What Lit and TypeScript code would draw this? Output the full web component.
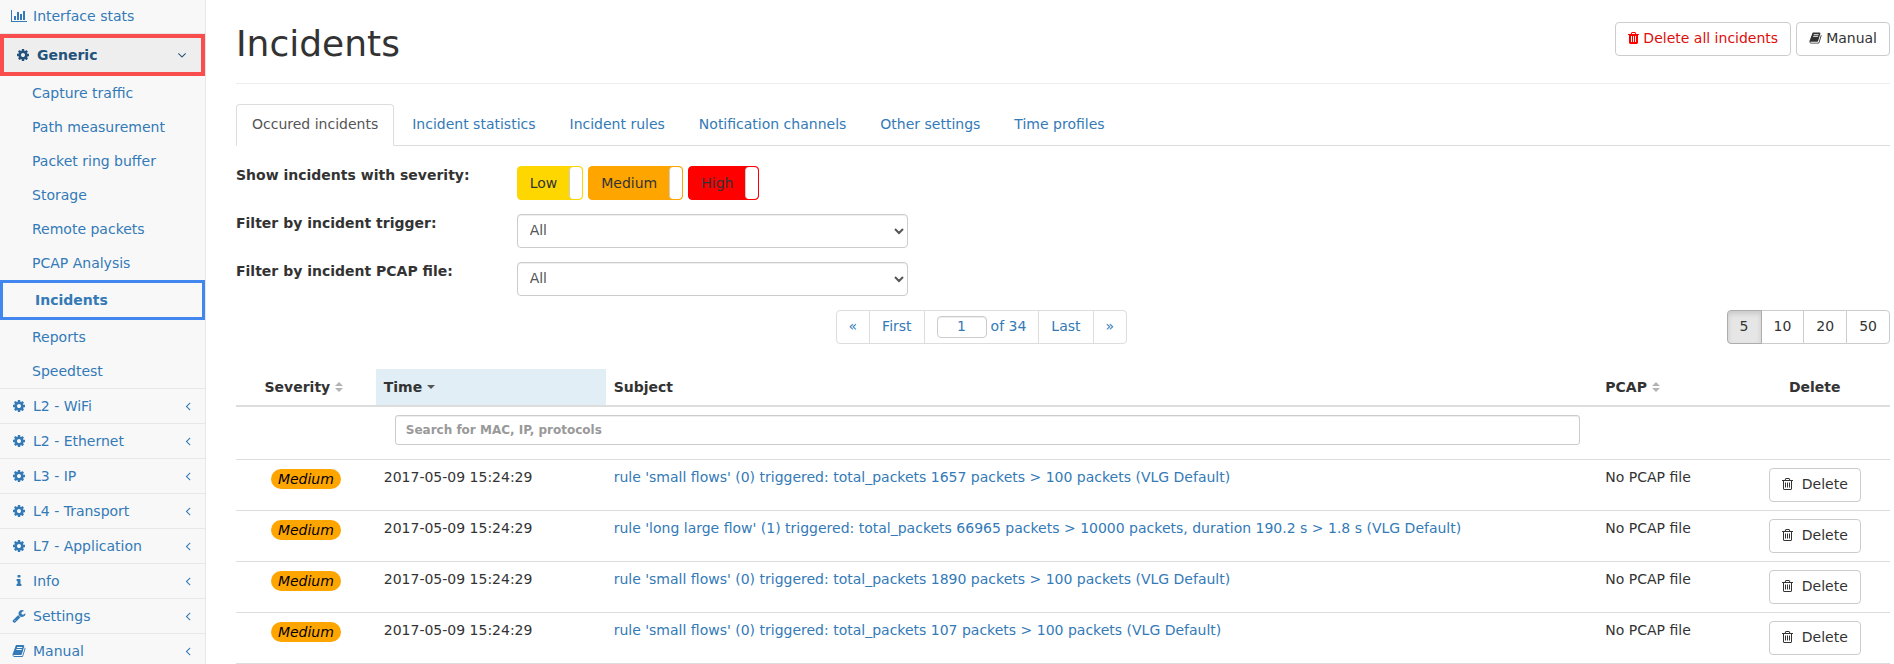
import { LitElement, html, css, svg } from "lit";
import { customElement, property, state } from "lit/decorators.js";
import { classMap } from "lit/directives/class-map.js";

const rail = "q0-14-9-23t-23-9h-64q-14 0-23 9t-9 23";
const railEnd = "q0 14 9 23t23 9h64q14 0 23-9t9-23z";
const lid =
  "h448l-48-117q-7-9-17-11h-317q-10 2-17 11zm928 32v64q0 14-9 23t-23 9h-96v948q0 83-47 143.500t-113 60.500h-832q-66 0-113-58.500t-47-141.500v-952h-96q-14 0-23-9t-9-23v-64q0-14 9-23t23-9h309l70-167q15-37 54-63t79-26h320q40 0 79 26t54 63l70 167h309q14 0 23 9t9 23z";

const icons: Record<string, { box: string; d: string }> = {
  chart: {
    box: "0 0 2048 1792",
    d: "M640 896v512h-256v-512h256zm384-512v1024h-256v-1024h256zm1024 1152v128h-2048v-1536h128v1408h1920zm-640-896v768h-256v-768h256zm384-384v1152h-256v-1152h256z",
  },
  cog: {
    box: "0 0 1792 1792",
    d: "M1152 896q0-106-75-181t-181-75-181 75-75 181 75 181 181 75 181-75 75-181zm512-109v222q0 12-8 23t-20 13l-185 28q-19 54-39 91 35 50 107 138 10 12 10 25t-9 23q-27 37-99 108t-94 71q-12 0-26-9l-138-108q-44 23-91 38-16 136-29 186-7 28-36 28h-222q-14 0-24.500-8.500t-11.500-21.500l-28-184q-49-16-90-37l-141 107q-10 9-25 9-14 0-25-11-126-114-165-168-7-10-7-23 0-12 8-23 15-21 51-66.500t54-70.500q-27-50-41-99l-183-27q-13-2-21-12.500t-8-23.500v-222q0-12 8-23t19-13l186-28q14-46 39-92-40-57-107-138-10-12-10-24 0-10 9-23 26-36 98.500-107.500t94.500-71.500q13 0 26 10l138 107q44-23 91-38 16-136 29-186 7-28 36-28h222q14 0 24.500 8.500t11.500 21.500l28 184q49 16 90 37l142-107q9-9 24-9 13 0 25 10 129 119 165 170 7 8 7 22 0 12-8 23-15 21-51 66.500t-54 70.500q26 50 41 98l183 28q13 2 21 12.500t8 23.500z",
  },
  info: {
    box: "0 0 1792 1792",
    d: "M1216 1344v128q0 26-19 45t-45 19h-512q-26 0-45-19t-19-45v-128q0-26 19-45t45-19h64v-384h-64q-26 0-45-19t-19-45v-128q0-26 19-45t45-19h384q26 0 45 19t19 45v576h64q26 0 45 19t19 45zm-128-1152v192q0 26-19 45t-45 19h-256q-26 0-45-19t-19-45v-192q0-26 19-45t45-19h256q26 0 45 19t19 45z",
  },
  wrench: {
    box: "0 0 1792 1792",
    d: "M448 1472q0-26-19-45t-45-19-45 19-19 45 19 45 45 19 45-19 19-45zm644-420l-682 682q-37 37-90 37-52 0-91-37l-106-108q-38-36-38-90 0-53 38-91l681-681q39 98 114.500 173.500t173.500 114.500zm634-435q0 39-23 106-47 134-164.500 217.500t-258.500 83.500q-185 0-316.500-131.500t-131.500-316.500 131.500-316.500 316.500-131.500q58 0 121.500 16.500t107.500 46.500q16 11 16 28t-16 28l-293 169v224l193 107q5-3 79-48.500t135.500-81 70.500-35.500q15 0 23.500 10t8.500 25z",
  },
  book: {
    box: "0 0 1792 1792",
    d: "M1703 478q40 57 18 129l-275 906q-19 64-76.500 107.500t-122.500 43.500h-923q-77 0-148.500-53.500t-99.500-131.500q-24-67-2-127 0-4 3-27t4-37q1-8-3-21.500t-3-19.500q2-11 8-21t16.500-23.500 16.500-23.500q23-38 45-91.500t30-91.500q3-10 .5-30t-.5-28q3-11 17-28t17-23q21-36 42-92t25-90q1-9-2.500-32t.5-28q4-13 22-30.500t22-22.500q19-26 42.500-84.500t27.500-96.500q1-8-3-25.500t-2-26.500q2-8 9-18t18-23 17-21q8-12 16.500-30.500t15-35 16-36 19.500-32 26.500-23.500 36-11.500 47.500 5.500l-1 3q38-9 51-9h761q74 0 114 56t18 130l-274 906q-36 119-71.500 153.500t-128.500 34.500h-869q-27 0-38 15-11 16-1 43 24 70 144 70h923q29 0 56-15.500t35-41.500l300-987q7-22 5-57 38 15 59 43zm-1064 2q-4 13 2 22.500t20 9.500h608q13 0 25.500-9.500t16.500-22.500l21-64q4-13-2-22.500t-20-9.500h-608q-13 0-25.500 9.500t-16.500 22.500zm-83 256q-4 13 2 22.500t20 9.500h608q13 0 25.500-9.500t16.500-22.500l21-64q4-13-2-22.500t-20-9.500h-608q-13 0-25.500 9.500t-16.500 22.500z",
  },
  left: {
    box: "0 0 1792 1792",
    d: "M1203 544q0 13-10 23l-393 393 393 393q10 10 10 23t-10 23l-50 50q-10 10-23 10t-23-10l-466-466q-10-10-10-23t10-23l466-466q10-10 23-10t23 10l50 50q10 10 10 23z",
  },
  down: {
    box: "0 0 1792 1792",
    d: "M1395 736q0 13-10 23l-466 466q-10 10-23 10t-23-10l-466-466q-10-10-10-23t10-23l50-50q10-10 23-10t23 10l393 393 393-393q10-10 23-10t23 10l50 50q10 10 10 23z",
  },
  trash: {
    box: "192 0 1408 1792",
    d: `M704 1376v-704${rail}v704${railEnd}m256 0v-704${rail}v704${railEnd}m256 0v-704${rail}v704${railEnd}m-544-992${lid}`,
  },
  trashOpen: {
    box: "192 0 1408 1792",
    d: `M704 736v576q0 14-9 23t-23 9h-64q-14 0-23-9t-9-23v-576q0-14 9-23t23-9h64q14 0 23 9t9 23zm256 0v576q0 14-9 23t-23 9h-64q-14 0-23-9t-9-23v-576q0-14 9-23t23-9h64q14 0 23 9t9 23zm256 0v576q0 14-9 23t-23 9h-64q-14 0-23-9t-9-23v-576q0-14 9-23t23-9h64q14 0 23 9t9 23zm128 724v-948h-896v948q0 22 7 40.500t14.500 27 10.500 8.500h832q3 0 10.500-8.500t14.500-27 7-40.500zm-672-1076${lid}`,
  },
  sort: {
    box: "0 0 8 14",
    d: "M0 6L4 2L8 6ZM0 8H8L4 12Z",
  },
  caret: {
    box: "0 0 8 14",
    d: "M0 5H8L4 9Z",
  },
};

const icon = (name: string) =>
  html`<svg class="icon ${name}" viewBox=${icons[name].box} aria-hidden="true">
    ${svg`<path d=${icons[name].d}></path>`}
  </svg>`;

@customElement("side-nav")
class SideNav extends LitElement {
  static styles = css`
    :host {
      display: block;
      background: #f8f8f8;
      border-right: 1px solid #e7e7e7;
    }
    ul {
      list-style: none;
      margin: 0;
      padding: 0;
    }
    .top {
      margin-top: -1px;
    }
    a {
      display: flex;
      align-items: center;
      color: #337ab7;
      text-decoration: none;
      line-height: 20px;
      padding: 7px 10px 7px 12px;
    }
    .top > li {
      border-bottom: 1px solid #e7e7e7;
    }
    .icon {
      height: 14px;
      fill: currentColor;
      flex: none;
    }
    .lead {
      width: 14px;
      margin-right: 7px;
      display: flex;
      justify-content: center;
    }
    .chart {
      width: 16px;
    }
    .label {
      flex: 1;
    }
    .arrow {
      display: flex;
    }
    .sub a {
      padding-left: 32px;
    }
    .open > a {
      border: 4px solid #fa4e4e;
      background: #eee;
      color: #23527c;
      font-weight: bold;
      padding: 7px 12px;
    }
    .sub .current {
      border: 3px solid #4287f0;
      font-weight: bold;
    }
  `;

  private sub = [
    "Capture traffic", "Path measurement", "Packet ring buffer", "Storage", "Remote packets",
    "PCAP Analysis", "Incidents", "Reports", "Speedtest",
  ];
  private rest = [
    ["cog", "L2 - WiFi"], ["cog", "L2 - Ethernet"], ["cog", "L3 - IP"], ["cog", "L4 - Transport"],
    ["cog", "L7 - Application"], ["info", "Info"], ["wrench", "Settings"], ["book", "Manual"],
  ];

  render() {
    return html`<nav aria-label="Main">
      <ul class="top">
        <li>
          <a href="#stats"><span class="lead">${icon("chart")}</span><span class="label">Interface stats</span></a>
        </li>
        <li class="open">
          <a href="#generic"
            ><span class="lead">${icon("cog")}</span><span class="label">Generic</span
            ><span class="arrow">${icon("down")}</span></a
          >
          <ul class="sub">
            ${this.sub.map(
              (s) => html`<li><a href="#" class=${classMap({ current: s === "Incidents" })}>${s}</a></li>`
            )}
          </ul>
        </li>
        ${this.rest.map(
          ([i, s]) => html`<li>
            <a href="#"
              ><span class="lead">${icon(i)}</span><span class="label">${s}</span
              ><span class="arrow">${icon("left")}</span></a
            >
          </li>`
        )}
      </ul>
    </nav>`;
  }
}

@customElement("severity-toggle")
class SeverityToggle extends LitElement {
  @property() label = "";
  @property({ reflect: true }) tone = "low";

  static styles = css`
    :host {
      display: block;
      --tone: #ffd700;
    }
    :host([tone="medium"]) {
      --tone: #ffa500;
    }
    :host([tone="high"]) {
      --tone: #ff0000;
    }
    label {
      position: relative;
      display: flex;
      height: 32px;
      border: 1px solid var(--tone);
      border-radius: 4px;
      background: var(--tone);
      color: #333;
      cursor: pointer;
    }
    .text {
      line-height: 20px;
      padding: 6px 12px;
    }
    .knob {
      width: 13px;
      background: #fff;
      box-sizing: border-box;
      border-left: 1px solid #ccc;
      border-radius: 4px;
    }
    input {
      position: absolute;
      inset: 0;
      margin: 0;
      width: 100%;
      height: 100%;
      opacity: 0;
      cursor: pointer;
    }
  `;

  render() {
    return html`<label
      ><input type="checkbox" checked /><span class="text">${this.label}</span><span class="knob"></span
    ></label>`;
  }
}

@customElement("app-root")
class AppRoot extends LitElement {
  @state() private rows = [
    "rule 'small flows' (0) triggered: total_packets 1657 packets > 100 packets (VLG Default)",
    "rule 'long large flow' (1) triggered: total_packets 66965 packets > 10000 packets, duration 190.2 s > 1.8 s (VLG Default)",
    "rule 'small flows' (0) triggered: total_packets 1890 packets > 100 packets (VLG Default)",
    "rule 'small flows' (0) triggered: total_packets 107 packets > 100 packets (VLG Default)",
  ];

  private tabs = [
    "Occured incidents", "Incident statistics", "Incident rules", "Notification channels",
    "Other settings", "Time profiles",
  ];

  static styles = css`
    :host {
      display: grid;
      grid-template-columns: 206px minmax(0, 1fr);
      height: 100vh;
      overflow: hidden;
      background: #fff;
      color: #333;
      font: 14px/18px "DejaVu Sans", sans-serif;
    }
    main {
      padding: 22px 4px 0 30px;
    }
    a {
      color: #337ab7;
      text-decoration: none;
    }
    button,
    input,
    select {
      font: inherit;
      box-sizing: border-box;
    }
    .icon {
      height: 14px;
      fill: currentColor;
      flex: none;
    }
    .head {
      display: flex;
      justify-content: space-between;
      align-items: flex-start;
      border-bottom: 1px solid #eee;
      margin-bottom: 20px;
      padding-bottom: 19px;
    }
    h1 {
      font-size: 36px;
      line-height: 40px;
      font-weight: 400;
      margin: 2px 0 0;
    }
    .actions {
      display: flex;
      gap: 5px;
    }
    .btn {
      display: inline-flex;
      align-items: center;
      gap: 4px;
      padding: 6px 12px 8px;
      border: 1px solid #ccc;
      border-radius: 4px;
      background: #fff;
      color: #333;
      cursor: pointer;
    }
    .btn .book {
      width: 13px;
    }
    .danger {
      color: #dd0c0c;
    }
    .danger .icon {
      fill: #f00;
    }
    .tabs {
      display: flex;
      gap: 2px;
      list-style: none;
      margin: 0 0 20px;
      padding: 0;
      border-bottom: 1px solid #ddd;
    }
    .tabs a {
      display: block;
      padding: 10px 15px 12px;
      border: 1px solid transparent;
      border-radius: 4px 4px 0 0;
      margin-bottom: -1px;
    }
    .tabs .active {
      color: #555;
      background: #fff;
      border-color: #ddd #ddd #fff;
    }
    .row {
      display: grid;
      grid-template-columns: repeat(12, minmax(0, 1fr));
      column-gap: 30px;
      margin-bottom: 14px;
    }
    .name {
      grid-column: span 2;
      font-weight: bold;
      white-space: nowrap;
    }
    .field {
      grid-column: span 3;
    }
    .toggles {
      display: flex;
      gap: 5px;
    }
    select {
      display: block;
      width: 100%;
      height: 34px;
      padding: 5px 8px 7px;
      border: 1px solid #ccc;
      border-radius: 4px;
      background: #fff;
      color: #555;
      box-shadow: inset 0 1px 1px rgba(0, 0, 0, 0.075);
    }
    .bar {
      display: flex;
      margin-bottom: 25px;
    }
    .pages {
      flex: 1;
      display: flex;
      justify-content: center;
      list-style: none;
      margin: 0;
      padding: 0;
    }
    .page {
      display: flex;
      gap: 4px;
      padding: 6px 12px 8px;
      border: 1px solid #ddd;
      margin-left: -1px;
      color: #337ab7;
    }
    .pages li:first-child .page {
      margin-left: 0;
      border-radius: 4px 0 0 4px;
    }
    .pages li:last-child .page {
      border-radius: 0 4px 4px 0;
    }
    .num {
      width: 50px;
      height: 22px;
      margin: -1px 0 -3px;
      padding: 0 0 2px;
      text-align: center;
      color: #337ab7;
      border: 1px solid #ccc;
      border-radius: 4px;
      background: #fff;
      box-shadow: inset 0 1px 1px rgba(0, 0, 0, 0.075);
    }
    .sizes {
      display: flex;
    }
    .sizes .btn {
      border-radius: 0;
      margin-left: -1px;
    }
    .sizes .btn:first-child {
      border-radius: 4px 0 0 4px;
      background: #e6e6e6;
      border-color: #adadad;
      box-shadow: inset 0 3px 5px rgba(0, 0, 0, 0.125);
      margin-left: 0;
      z-index: 1;
    }
    .sizes .btn:last-child {
      border-radius: 0 4px 4px 0;
    }
    table {
      width: 100%;
      table-layout: fixed;
      border-spacing: 0;
    }
    .c-sev {
      width: 8.45%;
    }
    .c-time {
      width: 13.9%;
    }
    .c-pcap {
      width: 8.6%;
    }
    .c-del {
      width: 9.1%;
    }
    th,
    td {
      padding: 8px;
      text-align: left;
      vertical-align: top;
    }
    thead th {
      line-height: 20px;
      border-bottom: 2px solid #ddd;
    }
    .mid {
      text-align: center;
    }
    .sorted {
      background: #e1eef5;
      background-clip: padding-box;
    }
    .sort,
    .caret {
      width: 8px;
      vertical-align: -2px;
      margin-left: 5px;
    }
    .sort {
      fill: #b3b3b3;
      margin-right: 4px;
    }
    .caret {
      fill: #555;
    }
    tbody td {
      border-top: 1px solid #ddd;
    }
    .line:last-child td {
      border-bottom: 1px solid #ddd;
    }
    .find th {
      padding-bottom: 14px;
    }
    .find .wide {
      padding-left: 19px;
      padding-right: 17px;
    }
    .search {
      display: block;
      width: 100%;
      height: 30px;
      padding: 5px 10px;
      font-size: 12px;
      font-weight: bold;
      line-height: 18px;
      border: 1px solid #ccc;
      border-radius: 3px;
      box-shadow: inset 0 1px 1px rgba(0, 0, 0, 0.075);
    }
    .search::placeholder {
      color: #999;
    }
    .badge {
      display: inline-block;
      padding: 0 7px;
      margin-top: 1px;
      line-height: 20px;
      border-radius: 10px;
      background: #ffa500;
      color: #000;
      font-style: italic;
    }
    .line .btn {
      gap: 9px;
      vertical-align: top;
    }
  `;

  render() {
    return html`
      <side-nav></side-nav>
      <main>
        <div class="head">
          <h1>Incidents</h1>
          <div class="actions">
            <button class="btn danger">${icon("trash")}Delete all incidents</button>
            <button class="btn">${icon("book")}Manual</button>
          </div>
        </div>
        <ul class="tabs">
          ${this.tabs.map((t, i) => html`<li><a href="#" class=${classMap({ active: i === 0 })}>${t}</a></li>`)}
        </ul>
        <div class="row">
          <span class="name">Show incidents with severity:</span>
          <div class="field toggles">
            <severity-toggle label="Low" tone="low"></severity-toggle>
            <severity-toggle label="Medium" tone="medium"></severity-toggle>
            <severity-toggle label="High" tone="high"></severity-toggle>
          </div>
        </div>
        <div class="row">
          <label class="name" for="trigger">Filter by incident trigger:</label>
          <div class="field"><select id="trigger"><option>All</option></select></div>
        </div>
        <div class="row">
          <label class="name" for="pcap">Filter by incident PCAP file:</label>
          <div class="field"><select id="pcap"><option>All</option></select></div>
        </div>
        <div class="bar">
          <ul class="pages">
            <li><a class="page" href="#" aria-label="Previous">«</a></li>
            <li><a class="page" href="#">First</a></li>
            <li>
              <label class="page"><input class="num" type="text" value="1" aria-label="Page" />of 34</label>
            </li>
            <li><a class="page" href="#">Last</a></li>
            <li><a class="page" href="#" aria-label="Next">»</a></li>
          </ul>
          <div class="sizes">${[5, 10, 20, 50].map((n) => html`<button class="btn">${n}</button>`)}</div>
        </div>
        <table>
          <colgroup>
            <col class="c-sev" />
            <col class="c-time" />
            <col />
            <col class="c-pcap" />
            <col class="c-del" />
          </colgroup>
          <thead>
            <tr>
              <th class="mid">Severity${icon("sort")}</th>
              <th class="sorted">Time${icon("caret")}</th>
              <th>Subject</th>
              <th>PCAP${icon("sort")}</th>
              <th class="mid">Delete</th>
            </tr>
          </thead>
          <tbody>
            <tr class="find">
              <th></th>
              <th class="wide" colspan="2">
                <input
                  class="search"
                  type="text"
                  placeholder="Search for MAC, IP, protocols"
                  aria-label="Search for MAC, IP, protocols"
                />
              </th>
              <th></th>
              <th></th>
            </tr>
            ${this.rows.map(
              (r) => html`<tr class="line">
                <td class="mid"><span class="badge">Medium</span></td>
                <td>2017-05-09 15:24:29</td>
                <td><a href="#">${r}</a></td>
                <td>No PCAP file</td>
                <td class="mid"><button class="btn">${icon("trashOpen")}Delete</button></td>
              </tr>`
            )}
          </tbody>
        </table>
      </main>
    `;
  }
}
